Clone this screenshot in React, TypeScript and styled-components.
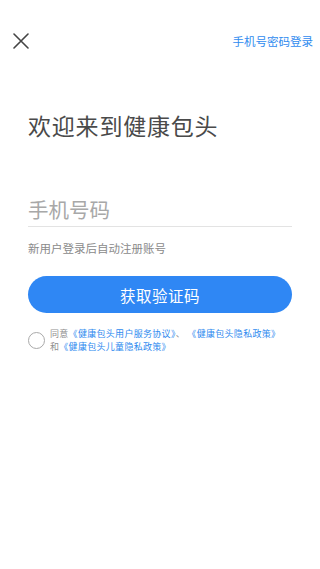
import React from 'react';
import styled, { createGlobalStyle } from 'styled-components';

const GlobalStyle = createGlobalStyle`
    html, body {
        margin: 0;
        padding: 0;
        background: #fff;
        font-family: "Noto Sans CJK SC", "Noto Sans", sans-serif;
    }
`;

const Page = styled.div`
    width: 320px;
    min-height: 569px;
    background: #fff;
    display: flex;
    flex-direction: column;
`;

const TopBar = styled.div`
    height: 82px;
    padding: 0 7px 0 13px;
    display: flex;
    align-items: center;
    justify-content: space-between;
`;

const CloseButton = styled.button`
    border: none;
    background: none;
    padding: 0;
    width: 16px;
    height: 16px;
    display: flex;
    cursor: pointer;
`;

const SwitchLink = styled.a`
    font-size: 11.5px;
    color: #2f8bef;
    text-decoration: none;
    line-height: 16px;
`;

const Content = styled.div`
    padding: 0 28px;
    display: flex;
    flex-direction: column;
`;

const Title = styled.h1`
    margin: 29px 0 0;
    font-size: 23px;
    font-weight: 400;
    line-height: 28px;
    color: #4a4a4a;
    letter-spacing: 0.8px;
`;

const PhoneInput = styled.input`
    margin-top: 53px;
    height: 34px;
    padding: 0;
    border: none;
    border-bottom: 1px solid #e3e3e3;
    outline: none;
    font-family: inherit;
    font-size: 20.5px;
    color: #333;
    background: transparent;

    &::placeholder {
        color: #a8a8a8;
    }
`;

const Hint = styled.p`
    margin: 13px 0 0;
    font-size: 11.5px;
    line-height: 16px;
    color: #8a8a8a;
`;

const PrimaryButton = styled.button`
    margin-top: 20px;
    height: 37px;
    border: none;
    border-radius: 19px;
    background: #2f87f4;
    color: #fff;
    font-family: inherit;
    font-size: 15.5px;
    letter-spacing: 0.5px;
    cursor: pointer;
`;

const Agreement = styled.div`
    margin-top: 14px;
    display: flex;
    align-items: center;
    gap: 5px;
`;

const Radio = styled.span`
    width: 15px;
    height: 15px;
    border-radius: 50%;
    border: 1px solid #a9a9a9;
    flex-shrink: 0;
`;

const AgreementText = styled.div`
    font-size: 9px;
    line-height: 13px;
    color: #8f8f8f;
    letter-spacing: 0.3px;
`;

const Policy = styled.a`
    color: #2f8bef;
    text-decoration: none;
`;

const CloseIcon = () => (
    <svg width="16" height="16" viewBox="0 0 16 16" fill="none">
        <path d="M1 1L15 15M15 1L1 15" stroke="#444" strokeWidth="1.6" strokeLinecap="round" />
    </svg>
);

const App = (): JSX.Element => (
    <Page>
        <GlobalStyle />
        <TopBar>
            <CloseButton type="button" title="关闭">
                <CloseIcon />
            </CloseButton>
            <SwitchLink href="#">手机号密码登录</SwitchLink>
        </TopBar>
        <Content>
            <Title>欢迎来到健康包头</Title>
            <PhoneInput type="tel" placeholder="手机号码" />
            <Hint>新用户登录后自动注册账号</Hint>
            <PrimaryButton type="button">获取验证码</PrimaryButton>
            <Agreement>
                <Radio />
                <AgreementText>
                    同意<Policy href="#">《健康包头用户服务协议》</Policy>、&nbsp;<Policy href="#">《健康包头隐私政策》</Policy>
                    <br />
                    和<Policy href="#">《健康包头儿童隐私政策》</Policy>
                </AgreementText>
            </Agreement>
        </Content>
    </Page>
);

export default App;
